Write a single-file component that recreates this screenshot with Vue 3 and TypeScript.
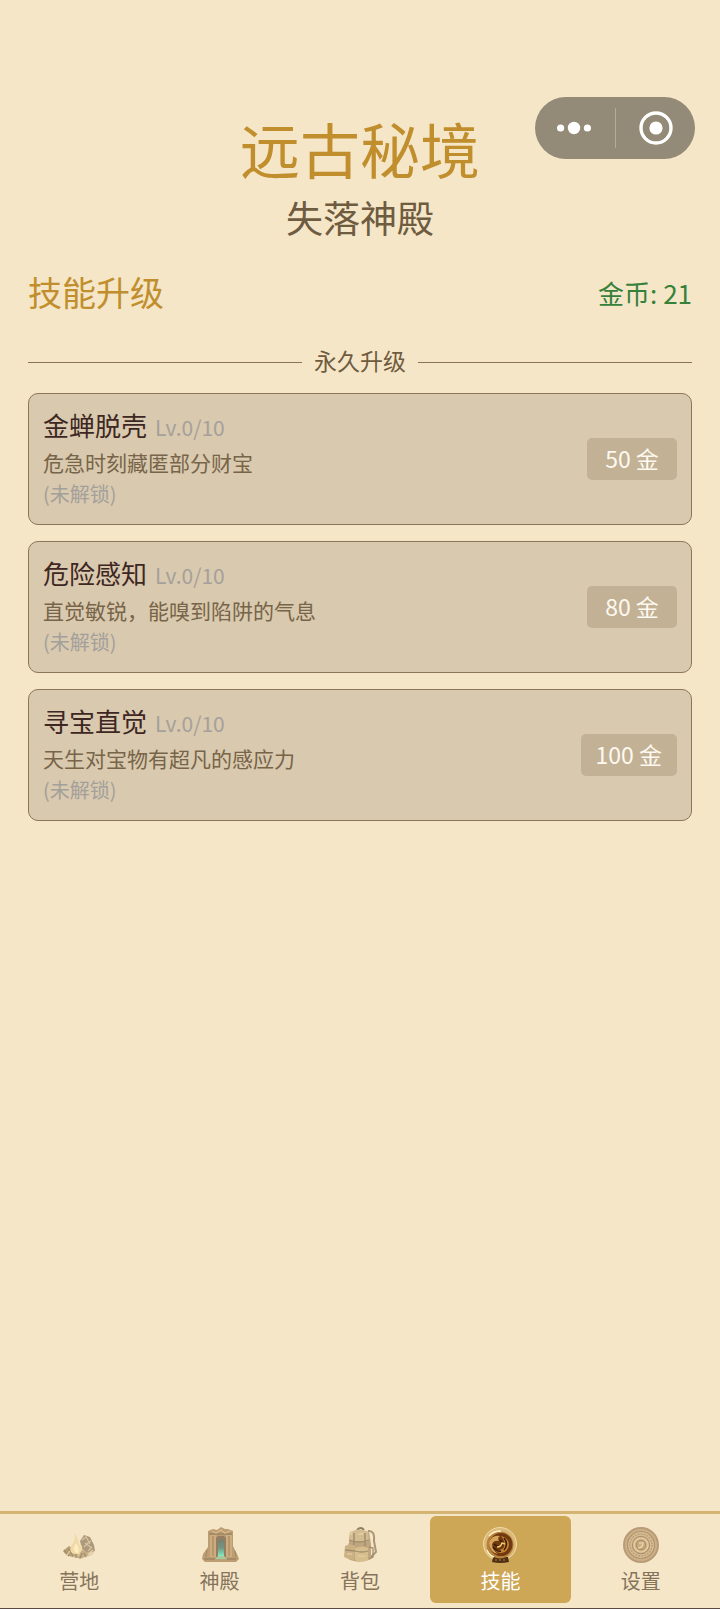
<script setup lang="ts">
import { ref } from 'vue'

interface Skill {
  name: string
  level: number
  max: number
  desc: string
  cost: number
}

const gold = ref(21)

const skills = ref<Skill[]>([
  { name: '金蝉脱壳', level: 0, max: 10, desc: '危急时刻藏匿部分财宝', cost: 50 },
  { name: '危险感知', level: 0, max: 10, desc: '直觉敏锐，能嗅到陷阱的气息', cost: 80 },
  { name: '寻宝直觉', level: 0, max: 10, desc: '天生对宝物有超凡的感应力', cost: 100 },
])

const tabs = [
  { id: 'camp', label: '营地' },
  { id: 'temple', label: '神殿' },
  { id: 'bag', label: '背包' },
  { id: 'skill', label: '技能' },
  { id: 'settings', label: '设置' },
]
const active = ref('skill')

function upgrade(skill: Skill) {
  if (gold.value < skill.cost || skill.level >= skill.max) return
  gold.value -= skill.cost
  skill.level += 1
}
</script>

<template>
  <div class="page">
    <div class="capsule">
      <button type="button" class="capsule-btn" aria-label="更多">
        <svg width="36" height="36" viewBox="0 0 36 36" fill="#fff">
          <circle cx="4.6" cy="18" r="3.6" />
          <circle cx="18" cy="18" r="6.2" />
          <circle cx="31.4" cy="18" r="3.6" />
        </svg>
      </button>
      <span class="capsule-line"></span>
      <button type="button" class="capsule-btn" aria-label="关闭">
        <svg width="36" height="36" viewBox="0 0 36 36">
          <circle cx="18" cy="18" r="15" fill="none" stroke="#fff" stroke-width="3.4" />
          <circle cx="18" cy="18" r="6.6" fill="#fff" />
        </svg>
      </button>
    </div>

    <header class="header">
      <h1 class="title">远古秘境</h1>
      <p class="subtitle">失落神殿</p>
    </header>

    <main class="content">
      <div class="bar">
        <h2 class="section">技能升级</h2>
        <span class="gold">金币: {{ gold }}</span>
      </div>

      <div class="divider"><span class="divider-text">永久升级</span></div>

      <ul class="list">
        <li v-for="s in skills" :key="s.name" class="card">
          <div class="info">
            <div class="name-row">
              <h3 class="name">{{ s.name }}</h3>
              <span class="level">Lv.{{ s.level }}/{{ s.max }}</span>
            </div>
            <p class="desc">{{ s.desc }}</p>
            <p v-if="s.level === 0" class="locked">(未解锁)</p>
          </div>
          <button type="button" class="buy" @click="upgrade(s)">{{ s.cost }} 金</button>
        </li>
      </ul>
    </main>

    <nav class="tabs">
      <button
        v-for="t in tabs"
        :key="t.id"
        type="button"
        class="tab"
        :class="{ active: active === t.id }"
        @click="active = t.id"
      >
        <svg v-if="t.id === 'camp'" class="icon" viewBox="0 0 38 38">
          <ellipse cx="19" cy="26" rx="15" ry="6" fill="#c9b083" opacity="0.5" />
          <path d="M3 25 L9 20 L17 25 L14 31 Q6 30 3 25Z" fill="#9a8256" />
          <path d="M10 28 L17 23 L26 25 L29 29 L20 33Z" fill="#b0956a" />
          <path d="M20 15 L24 9 L30 11 L34 19 L35 25 L28 27 L22 23Z" fill="#8f7a5d" />
          <path d="M22 14 L26 11 L30 18 M25 17 L32 22 M24 21 L28 17 L31 15 M28 25 L32 21" stroke="#cdb88f" stroke-width="1.2" fill="none" />
          <path d="M15 7 Q19 14 19 19 Q23 18 22 24 Q20 29 15 28 Q8 27 11 20 Q15 16 15 7Z" fill="#f1d59b" />
          <path d="M16 17 Q20 23 18 27 Q11 26 16 17Z" fill="#fff0bd" />
          <path d="M4 24 L9 30 M8 22 L13 30 M20 32 L22 27 M26 31 L24 27 M16 32 L16 28" stroke="#806843" stroke-width="1.2" />
          <path d="M7 29 L10 25 M18 30 L20 27 M28 28 L33 24" stroke="#e3c991" stroke-width="1.2" />
        </svg>

        <svg v-else-if="t.id === 'temple'" class="icon" viewBox="0 0 38 38">
          <defs>
            <linearGradient id="portal" x1="0" y1="0" x2="0" y2="1">
              <stop offset="0" stop-color="#46574f" />
              <stop offset="0.5" stop-color="#3e7565" />
              <stop offset="1" stop-color="#54eec0" />
            </linearGradient>
          </defs>
          <path d="M7 5 L12 3 L16 4 L20 1 L24 3 L27 3 L32 5 L32 20 L36 28 L38 33 L35 36 L4 36 L1 33 L2 28 L7 21Z" fill="#a5804f" />
          <path d="M8 8 L31 8 M3 33 L14 33 M26 33 L35 33" stroke="#7a5d3c" stroke-width="1.3" />
          <path d="M9 9 H15 V31 H9Z M25 9 H31 V31 H25Z" fill="#bd9561" />
          <path d="M12 10 V30 M28 10 V30 M6 24 L5 31 M34 25 L35 31" stroke="#86643d" stroke-width="1.2" />
          <path d="M15 12 L17 10 H23 L25 12 V31 H15Z" fill="#6b5338" />
          <path d="M17 14 H23 V30 H17Z" fill="url(#portal)" />
          <path d="M11 5 L15 7 L20 4 L24 7 L29 5" stroke="#d1aa72" stroke-width="1.2" fill="none" />
          <path d="M14 33 L17 30 H23 L26 33Z" fill="#85bd90" />
        </svg>

        <svg v-else-if="t.id === 'bag'" class="icon" viewBox="0 0 38 38">
          <path d="M27 5 Q34 4 33 15 L35 26 L29 32" fill="none" stroke="#8c7656" stroke-width="2" />
          <path d="M16 4 Q20 0 23 4" fill="none" stroke="#665238" stroke-width="2" />
          <path d="M9 7 Q18 2 28 6 L30 18 L30 33 Q20 38 9 34 L5 31 L8 16Z" fill="#a98b5f" />
          <path d="M9 6 Q19 1 27 6 L28 15 Q19 18 8 14Z" fill="#c7ab7c" />
          <path d="M4 20 Q9 17 14 20 L13 34 Q8 34 3 31Z" fill="#bb9c68" />
          <path d="M14 22 Q21 19 27 22 L27 34 Q20 37 14 34Z" fill="#cbae75" />
          <path d="M8 14 Q19 18 28 14 M14 25 Q21 27 27 25 M4 24 L14 25 M28 21 L32 22 L32 31 L28 33" stroke="#806949" stroke-width="1.3" fill="none" />
          <path d="M13 7 V19 M24 7 V20" stroke="#7c6647" stroke-width="1.4" />
          <path d="M10 9 L11 6 M17 8 Q20 9 22 7 M17 30 H24 M6 28 H11" stroke="#e0ca9c" stroke-width="1.2" fill="none" />
        </svg>

        <svg v-else-if="t.id === 'skill'" class="icon" viewBox="0 0 38 38">
          <circle cx="19" cy="18" r="16.5" fill="#dcb878" stroke="#f0dba8" stroke-width="1" />
          <path d="M12 31 H27 L28 36 Q19 38 11 36Z" fill="#4f2f14" />
          <circle cx="19" cy="19" r="13.5" fill="#b5813c" />
          <circle cx="20" cy="18.5" r="11.5" fill="#70390f" />
          <path d="M8 17 Q11 8 19 10 Q16 12 18 15 Q12 14 11 19 Q12 25 17 28 Q9 27 8 17Z" fill="#d7a65a" />
          <path d="M20 10 Q28 12 28 19 Q27 26 20 27 Q16 27 14 24 Q20 25 23 21 Q25 16 20 10Z" fill="#c4842f" />
          <path d="M13 18 Q17 22 21 19 Q22 16 19 14 M23 12 Q28 18 23 24 M12 21 Q16 26 20 25" fill="none" stroke="#3c1b09" stroke-width="1.5" />
          <path d="M16 21 Q20 21 21 17 L24 18" fill="none" stroke="#f3cb71" stroke-width="1.4" />
          <path d="M8 10 Q12 5 20 5 M6 24 Q8 29 13 31" fill="none" stroke="#fff0c6" stroke-width="1.4" />
          <path d="M15 33 V35 M19 33 V35 M23 33 V35" stroke="#aa7433" stroke-width="1.2" />
        </svg>

        <svg v-else class="icon" viewBox="0 0 38 38">
          <circle cx="19" cy="19" r="17" fill="#bc9a6c" stroke="#a17d55" stroke-width="2" />
          <circle cx="19" cy="19" r="13.5" fill="#cfae7e" stroke="#92724d" stroke-width="1.2" />
          <circle cx="19" cy="19" r="11" fill="none" stroke="#a5835a" stroke-width="1.6" stroke-dasharray="2 1" />
          <circle cx="19" cy="19" r="8.6" fill="#c4a26f" stroke="#8d6e49" stroke-width="1.1" />
          <circle cx="19" cy="19" r="7" fill="none" stroke="#e2c899" stroke-width="1.1" />
          <circle cx="19" cy="19" r="4.6" fill="#b9945e" stroke="#8a6b47" stroke-width="1.2" />
          <path d="M16 22 Q21 22 21 16 M17 17 H20" fill="none" stroke="#ead5a5" stroke-width="1.2" />
        </svg>
        <span class="tab-label">{{ t.label }}</span>
      </button>
    </nav>
  </div>
</template>

<style>
body {
  background: #f5e6c8;
}
</style>

<style scoped>
.page {
  position: relative;
  display: flex;
  flex-direction: column;
  min-height: 100vh;
  background: #f5e6c8;
  font-family: 'Noto Sans CJK SC', sans-serif;
}

h1,
h2,
h3,
p,
ul {
  margin: 0;
  padding: 0;
  font-weight: 400;
}

button {
  border: 0;
  padding: 0;
  background: none;
  font-family: inherit;
  cursor: pointer;
}

.capsule {
  position: absolute;
  top: 97px;
  right: 25px;
  display: flex;
  align-items: center;
  width: 160px;
  height: 62px;
  border-radius: 31px;
  background: #938a77;
}

.capsule-btn {
  flex: 1;
  display: flex;
  justify-content: center;
}

.capsule-line {
  width: 1px;
  height: 40px;
  margin: 0 2px;
  background: #b5ac98;
}

.header {
  padding-top: 112px;
  text-align: center;
}

.title {
  font-size: 60px;
  line-height: 72px;
  color: #c08e2c;
}

.subtitle {
  margin-top: 10px;
  font-size: 37px;
  line-height: 46px;
  color: #6f5b40;
}

.content {
  flex: 1;
  padding: 27px 28px;
}

.bar {
  display: flex;
  align-items: center;
  justify-content: space-between;
}

.section {
  font-size: 34px;
  line-height: 50px;
  color: #c08e2c;
}

.gold {
  font-size: 26px;
  color: #35813a;
}

.divider {
  display: flex;
  align-items: center;
  gap: 12px;
  margin: 26px 0 12px;
  font-size: 23px;
  line-height: 34px;
  color: #6f5b40;
}

.divider-text {
  padding-bottom: 4px;
}

.divider::before,
.divider::after {
  content: '';
  flex: 1;
  height: 1px;
  background: #8b7355;
}

.list {
  display: flex;
  flex-direction: column;
  gap: 16px;
  list-style: none;
}

.card {
  display: flex;
  align-items: center;
  justify-content: space-between;
  padding: 12px 14px;
  border: 1px solid #8b7657;
  border-radius: 10px;
  background: #d9c9ae;
}

.info {
  padding-bottom: 4px;
}

.name-row {
  display: flex;
  align-items: baseline;
  gap: 8px;
}

.name {
  font-size: 26px;
  line-height: 38px;
  color: #3e2723;
}

.level {
  font-size: 21px;
  color: #a5a09a;
}

.desc {
  font-size: 21px;
  line-height: 36px;
  color: #776449;
}

.locked {
  font-size: 20px;
  line-height: 28px;
  color: #a3a09b;
}

.buy {
  min-width: 90px;
  padding: 0 15px 2px;
  border-radius: 5px;
  background: #c2b195;
  font-size: 23px;
  line-height: 40px;
  color: #fdf9f0;
}

.tabs {
  display: flex;
  padding: 2px 9px 5px;
  border-top: 3px solid #d3b472;
  border-bottom: 1px solid #5a4a42;
}

.tab {
  flex: 1;
  display: flex;
  flex-direction: column;
  align-items: center;
  gap: 3px;
  padding: 10px 0 8px;
  border-radius: 6px;
  color: #85735a;
}

.tab.active {
  background: #cda656;
  color: #fff;
}

.icon {
  width: 38px;
  height: 38px;
  opacity: 0.7;
}

.tab.active .icon {
  opacity: 1;
}

.tab-label {
  font-size: 20px;
  line-height: 28px;
}
</style>
